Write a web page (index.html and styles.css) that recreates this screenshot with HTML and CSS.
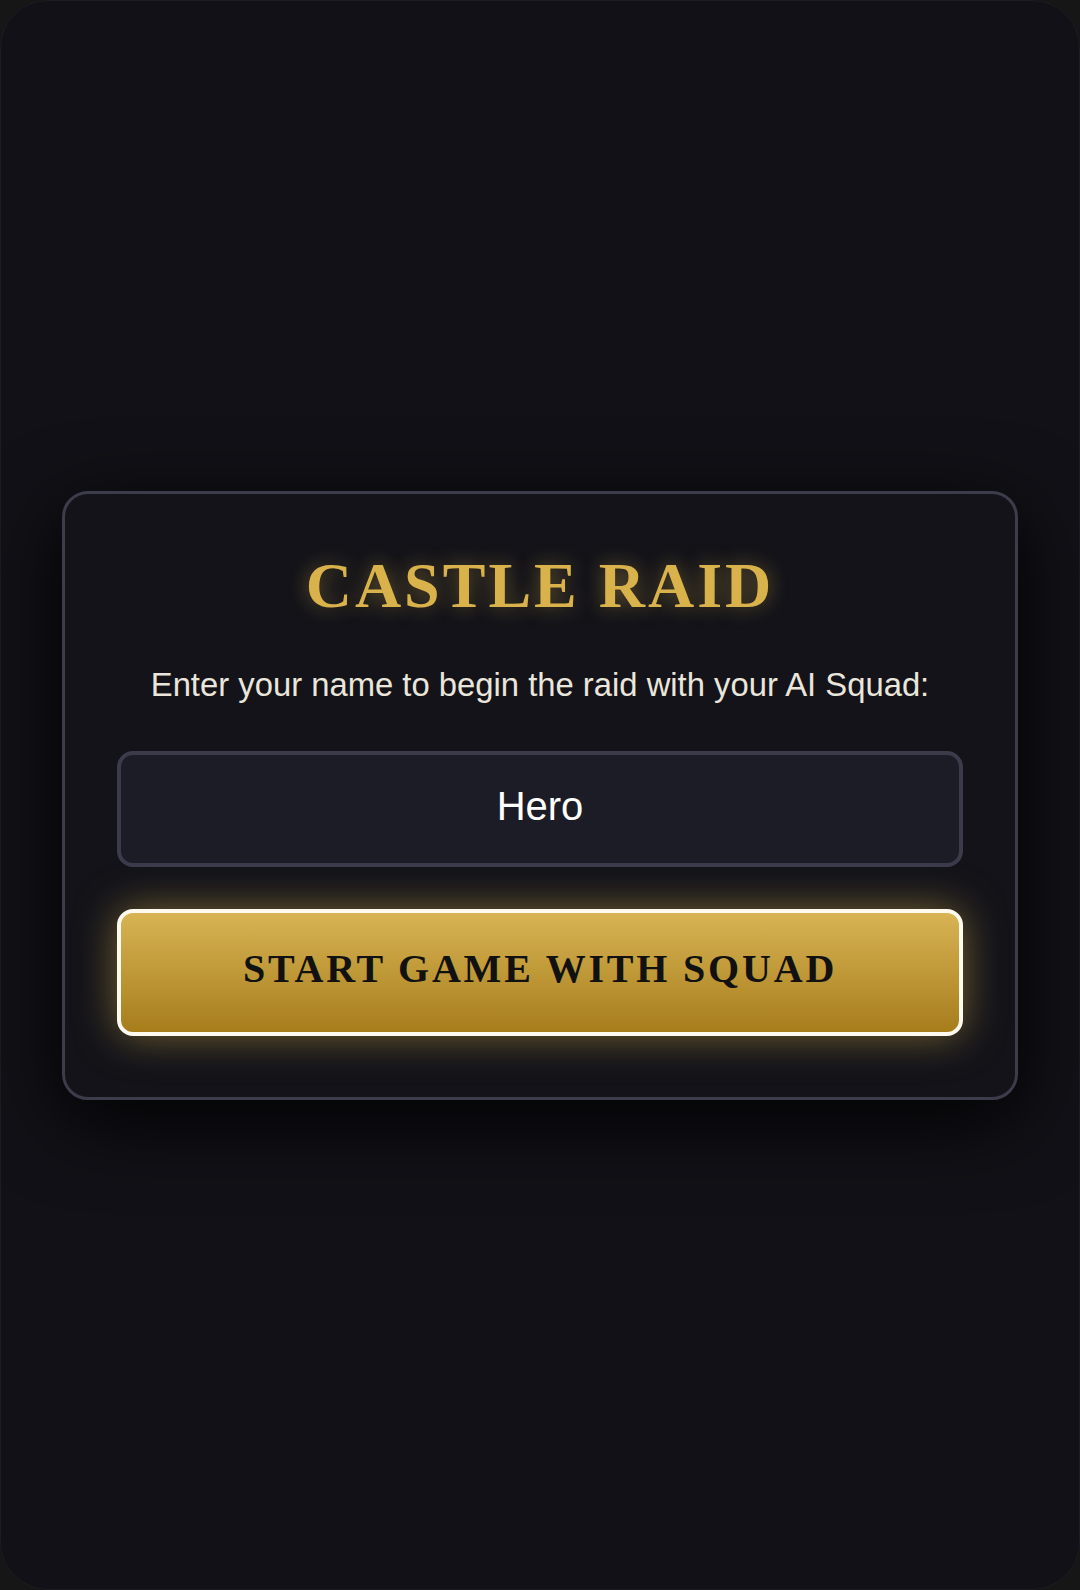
FILE: index.html
```html
<!DOCTYPE html>
<html lang="en">
<head>
<meta charset="utf-8">
<title>Castle Raid</title>
<link rel="stylesheet" href="styles.css">
</head>
<body>
<div class="frame">
  <div class="card">
    <h1 class="title">CASTLE RAID</h1>
    <p class="subtitle">Enter your name to begin the raid with your AI Squad:</p>
    <input class="name-input" type="text" value="Hero">
    <button class="start-btn" type="button">START GAME WITH SQUAD</button>
  </div>
</div>
</body>
</html>
```

FILE: styles.css
```css
* { box-sizing: border-box; }

html, body {
  margin: 0;
  padding: 0;
  background: #161616;
}

.frame {
  width: 1080px;
  height: 1590px;
  border-radius: 48px;
  border: 1px solid #1c1c21;
  background: #111117;
  display: flex;
  align-items: center;
  justify-content: center;
}

.card {
  width: 956px;
  border: 3px solid #3c3c4b;
  border-radius: 26px;
  background: #131319;
  box-shadow: 0 20px 80px rgba(0, 0, 0, 0.9);
  padding: 52px 52px 61px;
  display: flex;
  flex-direction: column;
  align-items: stretch;
}

.title {
  margin: 0;
  text-align: center;
  font-family: "Liberation Serif", "Times New Roman", serif;
  font-weight: bold;
  font-size: 64px;
  line-height: 80px;
  letter-spacing: 3px;
  color: #d9b24c;
  text-shadow: 0 0 20px rgba(217, 178, 76, 0.45);
}

.subtitle {
  margin: 39px 0 0;
  text-align: center;
  font-family: "Liberation Sans", Arial, sans-serif;
  font-size: 32.8px;
  line-height: 40px;
  color: #ebe6dc;
}

.name-input {
  margin-top: 46px;
  height: 116px;
  width: 100%;
  border: 4px solid #3b3b4c;
  border-radius: 16px;
  background: #1c1c27;
  color: #ffffff;
  font-family: "Liberation Sans", Arial, sans-serif;
  font-size: 40px;
  text-align: center;
  padding: 0 20px 4px;
  outline: none;
}

.start-btn {
  margin-top: 42px;
  height: 127px;
  width: 100%;
  border: 4px solid #fffaf0;
  border-radius: 16px;
  background: linear-gradient(to bottom, #d8b454, #a77d1c);
  box-shadow: 0 0 40px rgba(217, 178, 76, 0.5);
  color: #111111;
  font-family: "Liberation Serif", "Times New Roman", serif;
  font-weight: bold;
  font-size: 40px;
  letter-spacing: 2.8px;
  padding: 0 0 8px;
  cursor: pointer;
}
```
